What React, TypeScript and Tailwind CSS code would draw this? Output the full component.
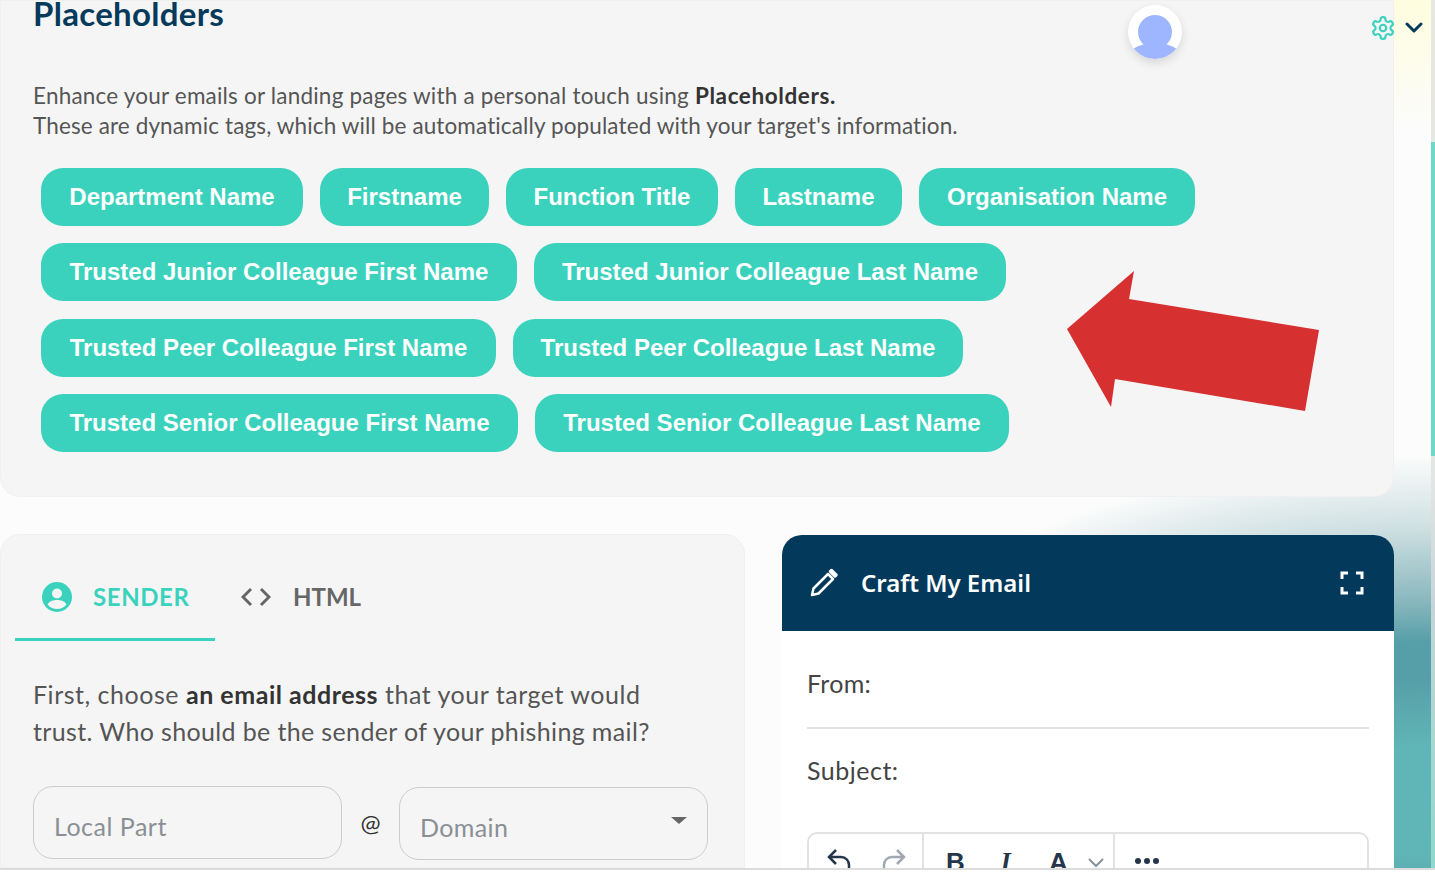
import React from "react";

const row1 = [
  ["Department Name", "w-[262px]"],
  ["Firstname", "w-[169px]"],
  ["Function Title", "w-[212px]"],
  ["Lastname", "w-[167px]"],
  ["Organisation Name", "w-[276px]"],
];
const row2 = [
  ["Trusted Junior Colleague First Name", "w-[476px]"],
  ["Trusted Junior Colleague Last Name", "w-[472px]"],
];
const row3 = [
  ["Trusted Peer Colleague First Name", "w-[455px]"],
  ["Trusted Peer Colleague Last Name", "w-[450px]"],
];
const row4 = [
  ["Trusted Senior Colleague First Name", "w-[477px]"],
  ["Trusted Senior Colleague Last Name", "w-[474px]"],
];

function Row({ items }: { items: string[][] }) {
  return (
    <div className="flex gap-[17px]">
      {items.map(([t, w]) => (
        <span
          key={t}
          className={`flex h-[58px] items-center justify-center rounded-[22px] bg-[#3bd2bd] font-['Liberation_Sans',sans-serif] text-[24px] font-bold whitespace-nowrap text-white ${w}`}
        >
          {t}
        </span>
      ))}
    </div>
  );
}

export default function App() {
  return (
    <div className="relative h-[879px] w-[1435px] overflow-hidden bg-white font-['Lato',sans-serif]">
      <div className="relative flex h-[870px] border-b-2 border-[#dcdcdc]">
        <div className="flex min-w-0 flex-1 flex-col overflow-hidden bg-[radial-gradient(ellipse_640px_345px_at_100%_800px,#60b6b6_15%,#579fa8_35%,#579fa8_46%,#8ab8be_58%,#cfe0e2_79%,transparent_100%),linear-gradient(180deg,#fefdde_0px,#fcfcfc_130px)] pr-[37px]">
          <section className="relative h-[497px] shrink-0 rounded-br-[20px] rounded-bl-[20px] border border-[#f0f0f0] bg-[#f5f5f5] pl-[32px]">
            <h1 className="-mt-[6px] text-[33px] leading-[36px] font-bold tracking-[0.3px] text-[#063a5b]">Placeholders</h1>
            <p className="mt-[50px] text-[22.5px] leading-[30px] text-[#555]">
              <span className="tracking-[0.2px]">Enhance your emails or landing pages with a personal touch using </span>
              <b className="tracking-[0.6px] text-[#333]">Placeholders.</b>
              <br />
              <span className="tracking-[0.12px]">These are dynamic tags, which will be automatically populated with your target's information.</span>
            </p>
            <div className="mt-[27px] ml-[8px] flex flex-col gap-[17.4px]">
              <Row items={row1} />
              <Row items={row2} />
              <Row items={row3} />
              <Row items={row4} />
            </div>
            <svg className="absolute top-[270px] left-[1065px]" width="256" height="142" viewBox="1066 271 256 142">
              <polygon points="1067,329 1134,271 1129,299 1319,330 1305,411 1115,379 1111,407" fill="#d73030" />
            </svg>
          </section>
          <div className="mt-[37px] flex min-h-0 flex-1 gap-[37px]">
            <section className="w-[745px] shrink-0 rounded-tr-[20px] rounded-tl-[20px] border border-[#f0f0f0] bg-[#f5f5f5]">
              <div className="flex pl-[14px]">
                <div className="flex h-[106px] w-[200px] items-center gap-[21px] border-b-[3px] border-[#3bd2bd] pt-[20px] pl-[27px]">
                  <svg width="30" height="30" viewBox="0 0 30 30">
                    <circle cx="15" cy="15" r="15" fill="#3bd2bd" />
                    <circle cx="15" cy="11.5" r="5" fill="#f5f5f5" />
                    <path d="M5.5 22.5C7.5 19 11 18 15 18s7.500 1 9.500 4.500C22 25.500 18.500 27 15 27s-7-1.500-9.500-4.500z" fill="#f5f5f5" />
                  </svg>
                  <span className="text-[24px] font-bold tracking-[0.6px] text-[#3bd2bd]">SENDER</span>
                </div>
                <div className="flex h-[106px] items-center gap-[22px] pt-[18px] pl-[26px]">
                  <svg width="30" height="20" viewBox="0 0 30 20" fill="none" stroke="#666" strokeWidth="3">
                    <path d="M10 2 2 10l8 8M20 2l8 8-8 8" />
                  </svg>
                  <span className="text-[24px] font-bold text-[#666]">HTML</span>
                </div>
              </div>
              <p className="mt-[35px] ml-[32px] text-[25px] leading-[36.500px] text-[#555]">
                <span className="tracking-[0.52px]">
                  First, choose <b className="text-[#333]">an email address</b> that your target would
                </span>
                <br />
                <span className="tracking-[0.36px]">trust. Who should be the sender of your phishing mail?</span>
              </p>
              <div className="mt-[36px] ml-[32px] flex items-center">
                <div className="flex h-[73px] w-[309px] items-center rounded-[20px] border border-[#ccc] pt-[8px] pl-[20px] text-[25px] tracking-[0.5px] text-[#8a8f94]">Local Part</div>
                <span className="w-[57px] text-center text-[24px] text-[#333]">@</span>
                <div className="mt-[2px] flex h-[73px] w-[309px] items-center justify-between rounded-[20px] border border-[#ccc] pt-[8px] pr-[20px] pl-[20px] text-[25px] tracking-[0.4px] text-[#8a8f94]">
                  Domain
                  <span className="mb-[15px] h-0 w-0 border-x-[8px] border-t-[7px] border-x-transparent border-t-[#666]" />
                </div>
              </div>
            </section>
            <section className="mt-[1px] min-w-0 flex-1 overflow-hidden rounded-t-[20px] bg-white">
              <div className="flex h-[96px] items-center bg-[#033a5b] pr-[30px] pl-[27px] text-white">
                <svg width="30" height="30" viewBox="0 0 30 30" fill="none" stroke="#fff" strokeWidth="2.500" strokeLinejoin="round">
                  <path d="M3 27l1.500-6.500L19 6l5 5L9.500 25.500z" />
                  <path d="M21 3.500l1.500-1.500 5 5-1.500 1.500z" fill="#fff" />
                </svg>
                <span className="ml-[22px] flex-1 font-['Noto_Sans',sans-serif] text-[24px] font-semibold">Craft My Email</span>
                <svg width="24" height="24" viewBox="0 0 24 24" fill="none" stroke="#fff" strokeWidth="3">
                  <path d="M2 8V2h6M16 2h6v6M22 16v6h-6M8 22H2v-6" />
                </svg>
              </div>
              <div className="px-[25px]">
                <div className="flex h-[98px] items-center border-b-2 border-[#e2e2e2] pt-[10px] text-[25px] tracking-[0.3px] text-[#444]">From:</div>
                <div className="flex h-[84px] items-center text-[25px] tracking-[0.5px] text-[#444]">Subject:</div>
                <div className="mt-[19px] flex h-[60px] rounded-t-[10px] border-2 border-[#e2e2e2] text-[#26364a]">
                  <div className="flex w-[115px] gap-[25px] border-r-2 border-[#e2e2e2] pt-[14px] pl-[17px]">
                    <svg width="28" height="26" viewBox="0 0 28 26" fill="none" stroke="#26364a" strokeWidth="2.500">
                      <path d="M10 2 3 9l7 7M3 9h12c5 0 8 4 8 8v6" />
                    </svg>
                    <svg width="28" height="26" viewBox="0 0 28 26" fill="none" stroke="#a0a9b2" strokeWidth="2.500">
                      <path d="M18 2l7 7-7 7M25 9H13c-5 0-8 4-8 8v6" />
                    </svg>
                  </div>
                  <div className="flex w-[191px] border-r-2 border-[#e2e2e2] pt-[14px] pl-[22px] font-['Liberation_Sans',sans-serif] text-[26px] leading-[28px]">
                    <span className="font-bold">B</span>
                    <span className="ml-[36px] font-['Liberation_Serif',serif] font-bold italic">I</span>
                    <span className="ml-[38px] flex gap-[20px]">
                      <span className="font-bold">A</span>
                      <svg className="mt-[10px]" width="16" height="10" viewBox="0 0 16 10" fill="none" stroke="#8a929a" strokeWidth="2">
                        <path d="M1 1l7 7 7-7" />
                      </svg>
                    </span>
                  </div>
                  <div className="flex gap-[3px] pt-[24px] pl-[20px]">
                    <span className="h-[6px] w-[6px] rounded-full bg-[#26364a]" />
                    <span className="h-[6px] w-[6px] rounded-full bg-[#26364a]" />
                    <span className="h-[6px] w-[6px] rounded-full bg-[#26364a]" />
                  </div>
                </div>
              </div>
            </section>
          </div>
        </div>
        <div className="w-[4px] shrink-0 bg-[linear-gradient(180deg,#e8e8e2_0%,#e4e6e4_55%,#c7d4d6_70%,#8fd8cc_100%)] pt-[142px]">
          <div className="h-[314px] w-[4px] bg-[#6fd8c9]" />
        </div>
      </div>
      <div className="absolute top-[5px] left-[1128px] flex h-[54px] w-[54px] items-end justify-center overflow-hidden rounded-full bg-white shadow-[0_4px_10px_rgba(0,0,0,0.12)]">
        <svg width="54" height="54" viewBox="0 0 54 54">
          <circle cx="27" cy="27" r="17" fill="#9db6ff" />
          <path d="M4 45C10 40 16 40 22 37h10c6 3 12 3 18 8-6 6-14 9-23 9S10 51 4 45z" fill="#9db6ff" />
        </svg>
      </div>
      <svg className="absolute top-[15px] left-[1370px]" width="26" height="26" viewBox="0 0 24 24" fill="none" stroke="#3bd2bd" strokeWidth="2" strokeLinecap="round" strokeLinejoin="round">
        <path d="M12.220 2h-.440a2 2 0 0 0-2 2v.180a2 2 0 0 1-1 1.730l-.430.250a2 2 0 0 1-2 0l-.150-.080a2 2 0 0 0-2.730.730l-.220.380a2 2 0 0 0 .730 2.730l.150.100a2 2 0 0 1 1 1.720v.510a2 2 0 0 1-1 1.740l-.150.090a2 2 0 0 0-.730 2.730l.220.380a2 2 0 0 0 2.730.730l.150-.080a2 2 0 0 1 2 0l.430.250a2 2 0 0 1 1 1.730V20a2 2 0 0 0 2 2h.440a2 2 0 0 0 2-2v-.180a2 2 0 0 1 1-1.730l.430-.250a2 2 0 0 1 2 0l.150.080a2 2 0 0 0 2.730-.730l.220-.390a2 2 0 0 0-.730-2.730l-.150-.080a2 2 0 0 1-1-1.740v-.500a2 2 0 0 1 1-1.740l.150-.090a2 2 0 0 0 .730-2.730l-.220-.380a2 2 0 0 0-2.730-.730l-.150.080a2 2 0 0 1-2 0l-.430-.250a2 2 0 0 1-1-1.730V4a2 2 0 0 0-2-2z" />
        <circle cx="12" cy="12" r="3" />
      </svg>
      <svg className="absolute top-[22px] left-[1405px]" width="18" height="12" viewBox="0 0 18 12" fill="none" stroke="#063a5b" strokeWidth="3" strokeLinecap="round" strokeLinejoin="round">
        <path d="M2 2l7 7 7-7" />
      </svg>
    </div>
  );
}
